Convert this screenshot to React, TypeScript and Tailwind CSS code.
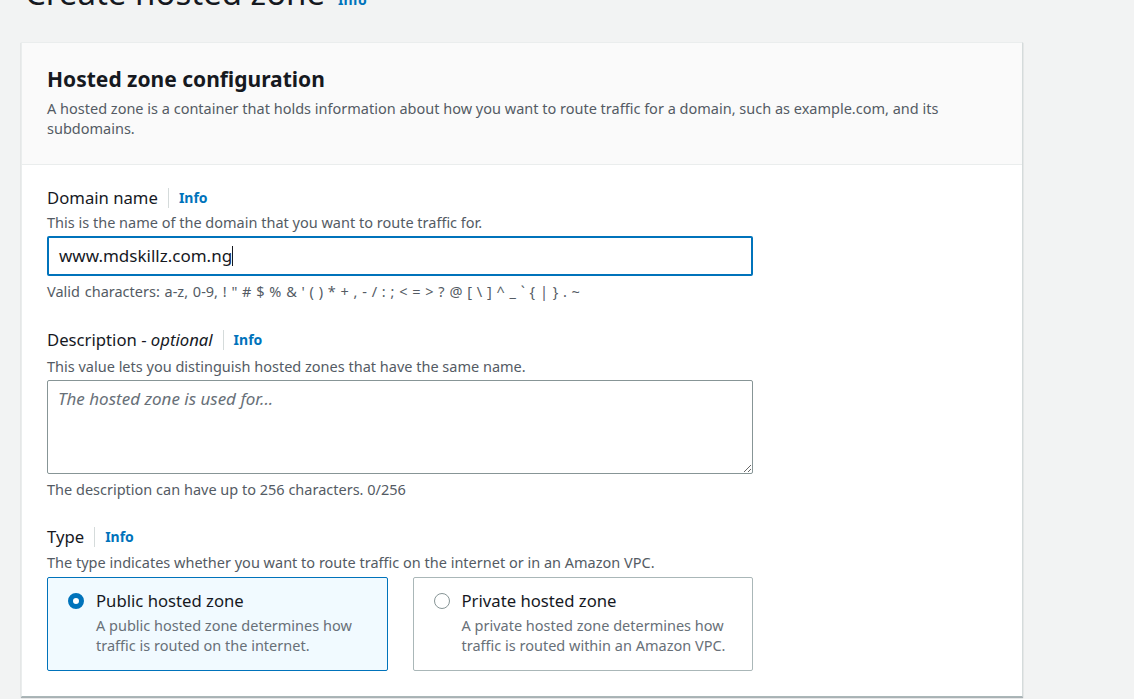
import { useState } from 'react'

const font = { fontFamily: '"Noto Sans", "Open Sans", Arial, sans-serif' }

function InfoLink() {
  return (
    <span className="ml-[10px] flex items-center border-l border-[#d5dbdb] pl-[10px] text-[14px] font-bold leading-[20px] text-[#0073bb]">
      Info
    </span>
  )
}

function FieldLabel({ children }: { children: React.ReactNode }) {
  return (
    <div className="flex items-center">
      <span className="text-[16.7px] leading-[22px] text-[#16191f]">{children}</span>
      <InfoLink />
    </div>
  )
}

function RadioCard({
  checked,
  title,
  text,
  onSelect,
}: {
  checked: boolean
  title: string
  text: string
  onSelect: () => void
}) {
  return (
    <button
      type="button"
      onClick={onSelect}
      className={
        checked
          ? 'flex h-[94px] flex-1 items-start gap-[12px] rounded-[2px] border border-[#0073bb] bg-[#f1faff] px-[20px] pt-[12px] text-left'
          : 'flex h-[94px] flex-1 items-start gap-[12px] rounded-[2px] border border-[#aab7b8] bg-white px-[20px] pt-[12px] text-left'
      }
    >
      <span className="mt-[3px] flex h-[16px] w-[16px] shrink-0 items-center justify-center">
        {checked ? (
          <span className="h-[16px] w-[16px] rounded-full border-[5px] border-[#0073bb] bg-white" />
        ) : (
          <span className="h-[16px] w-[16px] rounded-full border border-[#879596] bg-white" />
        )}
      </span>
      <span className="flex flex-col">
        <span className="text-[16.7px] leading-[22px] text-[#16191f]">{title}</span>
        <span className="mt-[3px] text-[14.5px] leading-[20px] text-[#687078]">{text}</span>
      </span>
    </button>
  )
}

export default function App() {
  const [zone, setZone] = useState<'public' | 'private'>('public')
  const [desc, setDesc] = useState('')

  return (
    <div style={font} className="h-[699px] w-[1134px] overflow-hidden bg-[#f2f3f3] pl-[21px]">
      <div className="mt-[-27px] flex items-baseline gap-[13px] pl-[4px]">
        <h1 className="text-[33px] leading-[40px] text-[#16191f]">Create hosted zone</h1>
        <span className="text-[14px] font-bold text-[#0073bb]">Info</span>
      </div>

      <div className="mt-[29px] w-[1002px] border border-[#eaeded] border-b-[#aab7b8] border-r-[#d5dbdb] bg-white shadow-[0_1px_1px_0_rgba(0,28,36,0.3)]">
        <div className="border-b border-[#eaeded] bg-[#fafafa] px-[25px] pb-[26px] pt-[22px]">
          <h2 className="text-[21px] font-bold leading-[28px] text-[#16191f]">Hosted zone configuration</h2>
          <p className="mt-[5px] w-[920px] text-[14.5px] leading-[20px] text-[#545b64]">
            A hosted zone is a container that holds information about how you want to route traffic for a domain,
            such as example.com, and its subdomains.
          </p>
        </div>

        <div className="flex flex-col px-[25px] pb-[25px] pt-[22px]">
          <FieldLabel>Domain name</FieldLabel>
          <p className="mt-[3px] text-[14.5px] leading-[20px] text-[#545b64]">
            This is the name of the domain that you want to route traffic for.
          </p>
          <div className="mt-[4px] flex h-[40px] w-[706px] items-center rounded-[2px] border-2 border-[#0073bb] bg-white px-[10px]">
            <span className="text-[17px] text-[#16191f]">www.mdskillz.com.ng</span>
            <span className="h-[20px] w-px bg-[#16191f]" />
          </div>
          <p className="mt-[5px] text-[14.5px] leading-[20px] text-[#545b64] [word-spacing:1px]">
            Valid characters: a-z, 0-9, ! " # $ % &amp; ' ( ) * + , - / : ; &lt; = &gt; ? @ [ \ ] ^ _ ` {'{'} | {'}'} . ~
          </p>

          <div className="mt-[28px]">
            <FieldLabel>
              Description - <i>optional</i>
            </FieldLabel>
          </div>
          <p className="mt-[5px] text-[14.5px] leading-[20px] text-[#545b64]">
            This value lets you distinguish hosted zones that have the same name.
          </p>
          <textarea
            value={desc}
            onChange={(e) => setDesc(e.target.value)}
            placeholder="The hosted zone is used for..."
            className="mt-[4px] h-[94px] w-[706px] rounded-[2px] border border-[#879596] bg-white px-[10px] py-[6px] text-[17px] leading-[24px] text-[#16191f] outline-none placeholder:italic placeholder:text-[#687078]"
            style={font}
          />
          <p className="mt-[5px] text-[14.5px] leading-[20px] text-[#545b64]">
            The description can have up to 256 characters. {desc.length}/256
          </p>

          <div className="mt-[27px]">
            <FieldLabel>Type</FieldLabel>
          </div>
          <p className="mt-[4px] text-[14.5px] leading-[20px] text-[#545b64]">
            The type indicates whether you want to route traffic on the internet or in an Amazon VPC.
          </p>
          <div className="mt-[5px] flex w-[706px] gap-[25px]">
            <RadioCard
              checked={zone === 'public'}
              title="Public hosted zone"
              text="A public hosted zone determines how traffic is routed on the internet."
              onSelect={() => setZone('public')}
            />
            <RadioCard
              checked={zone === 'private'}
              title="Private hosted zone"
              text="A private hosted zone determines how traffic is routed within an Amazon VPC."
              onSelect={() => setZone('private')}
            />
          </div>
        </div>
      </div>
    </div>
  )
}
